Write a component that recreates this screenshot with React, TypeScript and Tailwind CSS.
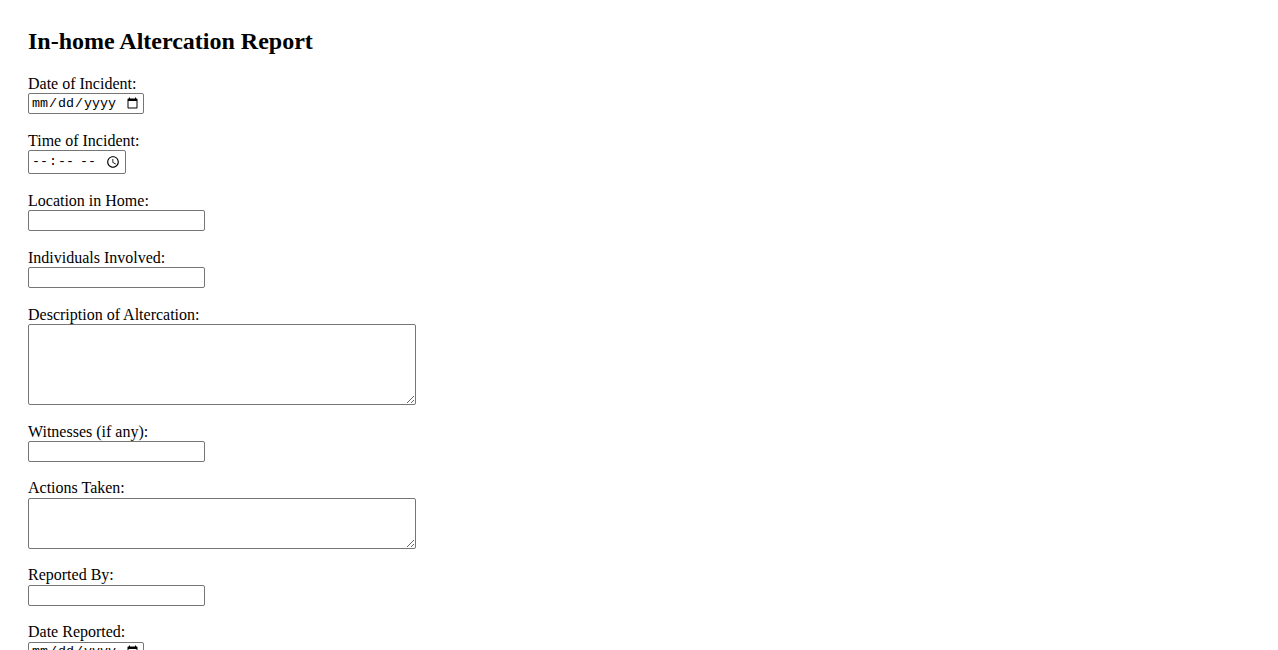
import React from 'react'

const field = 'block border border-[#767676] rounded-[2px] bg-white text-black outline-none px-[2px] py-[1px]'
const textBox = `${field} w-[177px] h-[21px] text-[13.33px] font-['Liberation_Sans',Arial,sans-serif]`
const dateBox = `${field} h-[21px] text-[13.33px] font-['Liberation_Mono','DejaVu_Sans_Mono',monospace]`
const area = `${field} w-[388px] text-[13.33px] font-['Liberation_Mono',monospace]`

function Label({ htmlFor, children }: { htmlFor: string; children: React.ReactNode }) {
  return (
    <label htmlFor={htmlFor} className="block leading-[18.4px]">
      {children}
    </label>
  )
}

export default function App() {
  return (
    <div className="min-h-screen bg-white text-black font-['Liberation_Serif','Times_New_Roman',serif] text-[16px] px-[28px] pt-[28px]">
      <h2 className="text-[24px] font-bold leading-[27.6px] mb-[19.4px]">In-home Altercation Report</h2>

      <form>
        <div className="mb-[17.5px]">
          <Label htmlFor="date">Date of Incident:</Label>
          <input id="date" type="date" className={`${dateBox} w-[116px]`} />
        </div>

        <div className="mb-[17.5px]">
          <Label htmlFor="time">Time of Incident:</Label>
          <input id="time" type="time" className={`${field} w-[98px] h-[24px] text-[13.33px] font-['Liberation_Mono',monospace]`} />
        </div>

        <div className="mb-[17.5px]">
          <Label htmlFor="location">Location in Home:</Label>
          <input id="location" type="text" className={textBox} />
        </div>

        <div className="mb-[17.5px]">
          <Label htmlFor="individuals">Individuals Involved:</Label>
          <input id="individuals" type="text" className={textBox} />
        </div>

        <div className="mb-[17.5px]">
          <Label htmlFor="description">Description of Altercation:</Label>
          <textarea id="description" className={`${area} h-[81px]`} />
        </div>

        <div className="mb-[17.5px]">
          <Label htmlFor="witnesses">Witnesses (if any):</Label>
          <input id="witnesses" type="text" className={textBox} />
        </div>

        <div className="mb-[17.5px]">
          <Label htmlFor="actions">Actions Taken:</Label>
          <textarea id="actions" className={`${area} h-[51px]`} />
        </div>

        <div className="mb-[17.5px]">
          <Label htmlFor="reporter">Reported By:</Label>
          <input id="reporter" type="text" className={textBox} />
        </div>

        <div className="mb-[17.5px]">
          <Label htmlFor="reported">Date Reported:</Label>
          <input id="reported" type="date" className={`${dateBox} w-[116px]`} />
        </div>
      </form>
    </div>
  )
}
